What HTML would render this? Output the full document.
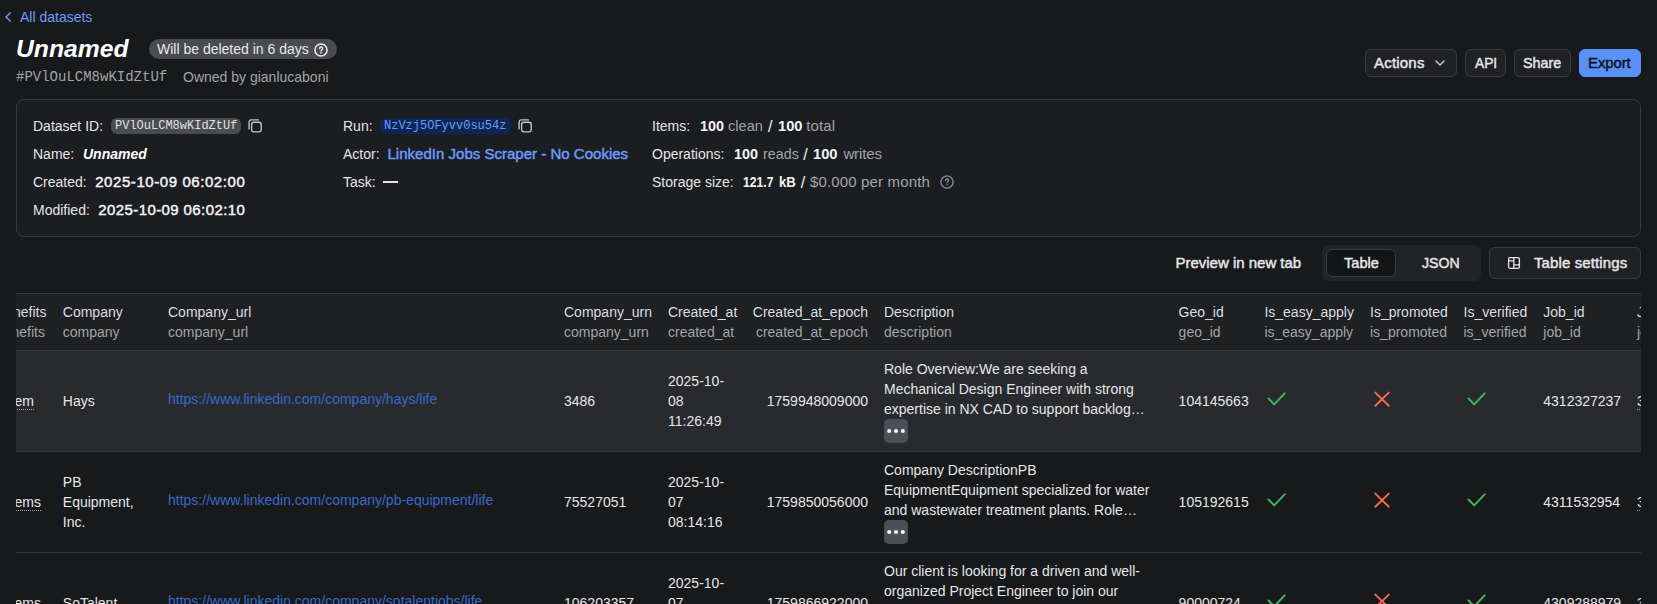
<!DOCTYPE html><html><head><meta charset="utf-8"><style>
*{margin:0;padding:0;box-sizing:border-box}
html,body{width:1657px;height:604px;overflow:hidden;background:#18191b;font-family:"Liberation Sans",sans-serif;font-size:14px;line-height:20px;color:#e6e6e8}
.a{position:absolute;white-space:nowrap}
.mono{font-family:"Liberation Mono",monospace}
.b{font-weight:700}
.g{color:#a3a4a8}
.lnk{color:#6b9bfa}
.btn{position:absolute;height:28px;border:1px solid #3b3c41;border-radius:6px;background:#202124;font-weight:700;line-height:26px;color:#e6e6e8}
.card{position:absolute;left:16px;top:99px;width:1625px;height:138px;border:1px solid #3a3b3f;border-radius:8px;background:#1c1d20}
.tbl{position:absolute;left:16px;top:293px;width:1625px;height:311px;overflow:hidden}
.cell{position:absolute;white-space:nowrap}
</style></head><body>
<svg class="a" style="left:4px;top:11px" width="8" height="12" viewBox="0 0 8 12"><path d="M6.2 2 L2 6 L6.2 10" fill="none" stroke="#6b9bfa" stroke-width="1.5" stroke-linecap="round" stroke-linejoin="round"/></svg>
<div class="a lnk" style="left:20px;top:7px;">All datasets</div>
<div class="a" style="left:16px;top:34px;font-size:24.7px;line-height:30px;font-weight:700;font-style:italic;color:#fff">Unnamed</div>
<div class="a" style="left:149px;top:39px;width:188px;height:20px;border-radius:10px;background:#494b50"></div>
<div class="a " style="left:157px;top:39px;color:#e8e8ea">Will be deleted in 6 days</div>
<svg class="a" style="left:314px;top:43px" width="14" height="14" viewBox="0 0 14 14"><circle cx="7" cy="7" r="6.1" fill="none" stroke="#ececee" stroke-width="1.5"/><path d="M5.55 5.5 a1.5 1.5 0 1 1 2.2 1.3 c-.45.25-.75.5-.75 1.05" fill="none" stroke="#ececee" stroke-width="1.4" stroke-linecap="round"/><circle cx="7" cy="9.7" r=".85" fill="#ececee"/></svg>
<div class="a mono g" style="left:16px;top:67px;font-size:14px">#PVlOuLCM8wKIdZtUf</div>
<div class="a g" style="left:183px;top:67px;">Owned by gianlucaboni</div>
<div class="btn" style="left:1365px;top:49px;width:92px;padding-left:9px"></div>
<svg class="a" style="left:1434px;top:58px" width="12" height="10" viewBox="0 0 12 10"><path d="M2 3 L6 7 L10 3" fill="none" stroke="#d6d6da" stroke-width="1.3" stroke-linecap="round" stroke-linejoin="round"/></svg>
<div class="btn" style="left:1465px;top:49px;width:41px;padding-left:9px"></div>
<div class="btn" style="left:1514px;top:49px;width:57px;padding-left:9px"></div>
<div class="btn" style="left:1579px;top:49px;width:62px;padding-left:9px;background:#5b8ff9;border-color:#5b8ff9;color:#111215"></div>
<div class="a" style="left:1374.00px;top:52.50px;font-size:15px;font-weight:400;letter-spacing:0.200px;color:#e6e6e8;-webkit-text-stroke:0.45px #e6e6e8;">Actions</div>
<div class="a" style="left:1474.90px;top:52.50px;font-size:15px;font-weight:400;letter-spacing:0.000px;color:#e6e6e8;-webkit-text-stroke:0.45px #e6e6e8;transform:scaleX(0.9167);transform-origin:0.00px 0;">API</div>
<div class="a" style="left:1523.30px;top:52.50px;font-size:15px;font-weight:400;letter-spacing:0.000px;color:#e6e6e8;-webkit-text-stroke:0.45px #e6e6e8;transform:scaleX(0.9550);transform-origin:0.00px 0;">Share</div>
<div class="a" style="left:1588.10px;top:52.50px;font-size:15px;font-weight:400;letter-spacing:-0.140px;color:#121316;-webkit-text-stroke:0.45px #121316;">Export</div>
<div class="card"></div>
<div class="a " style="left:33px;top:116px;">Dataset ID:</div>
<div class="a" style="left:111px;top:118px;width:130px;height:16px;border-radius:6px;background:#4b4c51"></div>
<div class="a mono" style="left:115px;top:116px;font-size:12px;color:#e0e0e3">PVlOuLCM8wKIdZtUf</div>
<svg class="a" style="left:247px;top:118px" width="16" height="16" viewBox="0 0 16 16"><rect x="4.6" y="4.2" width="9.6" height="9.6" rx="2.2" fill="none" stroke="#c4c5c9" stroke-width="1.35"/><path d="M2.1 10.9 V4 a2.1 2.1 0 0 1 2.1-2.1 H11.4" fill="none" stroke="#c4c5c9" stroke-width="1.35" stroke-linecap="round"/></svg>
<div class="a " style="left:33px;top:144px;">Name:</div>
<div class="a b" style="left:83px;top:144px;font-style:italic;color:#fff">Unnamed</div>
<div class="a " style="left:33px;top:172px;">Created:</div>
<div class="a" style="left:95.20px;top:171.50px;font-size:15px;font-weight:400;letter-spacing:0.572px;color:#f4f4f6;-webkit-text-stroke:0.45px #f4f4f6;">2025-10-09 06:02:00</div>
<div class="a " style="left:33px;top:200px;">Modified:</div>
<div class="a" style="left:98.30px;top:199.50px;font-size:15px;font-weight:400;letter-spacing:0.400px;color:#f4f4f6;-webkit-text-stroke:0.45px #f4f4f6;">2025-10-09 06:02:10</div>
<div class="a " style="left:343px;top:116px;">Run:</div>
<div class="a" style="left:380px;top:118px;width:131px;height:16px;border-radius:6px;background:#0f2553"></div>
<div class="a mono" style="left:384px;top:116px;font-size:12px;color:#6b9bfa">NzVzj5OFyvv0su54z</div>
<svg class="a" style="left:517px;top:118px" width="16" height="16" viewBox="0 0 16 16"><rect x="4.6" y="4.2" width="9.6" height="9.6" rx="2.2" fill="none" stroke="#c4c5c9" stroke-width="1.35"/><path d="M2.1 10.9 V4 a2.1 2.1 0 0 1 2.1-2.1 H11.4" fill="none" stroke="#c4c5c9" stroke-width="1.35" stroke-linecap="round"/></svg>
<div class="a " style="left:343px;top:144px;">Actor:</div>
<div class="a" style="left:387.50px;top:143.50px;font-size:15px;font-weight:400;letter-spacing:0.015px;color:#6b9bfa;-webkit-text-stroke:0.45px #6b9bfa;">LinkedIn Jobs Scraper - No Cookies</div>
<div class="a " style="left:343px;top:172px;">Task:</div>
<div class="a" style="left:383px;top:181px;width:15px;height:2px;background:#e6e6e8"></div>
<div class="a " style="left:652px;top:116px;">Items:</div>
<div class="a " style="left:652px;top:144px;">Operations:</div>
<div class="a " style="left:652px;top:172px;">Storage size:</div>
<div class="a" style="left:699.50px;top:115.50px;font-size:15px;font-weight:700;letter-spacing:0.000px;color:#f4f4f6;transform:scaleX(0.9560);transform-origin:0.00px 0;">100</div>
<div class="a" style="left:728.30px;top:115.50px;font-size:15px;font-weight:400;letter-spacing:0.000px;color:#a3a4a8;transform:scaleX(0.9722);transform-origin:0.00px 0;">clean</div>
<div class="a" style="left:767.90px;top:116.50px;font-size:16px;font-weight:400;letter-spacing:0.000px;color:#f4f4f6;">/</div>
<div class="a" style="left:777.50px;top:115.50px;font-size:15px;font-weight:700;letter-spacing:0.000px;color:#f4f4f6;transform:scaleX(0.9800);transform-origin:0.00px 0;">100</div>
<div class="a" style="left:806.20px;top:115.50px;font-size:15px;font-weight:400;letter-spacing:0.125px;color:#a3a4a8;">total</div>
<div class="a" style="left:733.70px;top:143.50px;font-size:15px;font-weight:700;letter-spacing:0.000px;color:#f4f4f6;transform:scaleX(0.9560);transform-origin:0.00px 0;">100</div>
<div class="a" style="left:762.50px;top:143.50px;font-size:15px;font-weight:400;letter-spacing:0.000px;color:#a3a4a8;transform:scaleX(0.9553);transform-origin:0.00px 0;">reads</div>
<div class="a" style="left:803.20px;top:144.50px;font-size:16px;font-weight:400;letter-spacing:0.000px;color:#f4f4f6;">/</div>
<div class="a" style="left:813.00px;top:143.50px;font-size:15px;font-weight:700;letter-spacing:0.000px;color:#f4f4f6;transform:scaleX(0.9800);transform-origin:0.00px 0;">100</div>
<div class="a" style="left:843.40px;top:143.50px;font-size:15px;font-weight:400;letter-spacing:-0.120px;color:#a3a4a8;">writes</div>
<div class="a" style="left:743.00px;top:171.50px;font-size:15px;font-weight:700;letter-spacing:0.000px;color:#f4f4f6;transform:scaleX(0.8132);transform-origin:0.00px 0;">121.7</div>
<div class="a" style="left:779.30px;top:171.50px;font-size:15px;font-weight:700;letter-spacing:0.000px;color:#f4f4f6;transform:scaleX(0.8737);transform-origin:0.00px 0;">kB</div>
<div class="a" style="left:800.80px;top:172.50px;font-size:16px;font-weight:400;letter-spacing:0.000px;color:#f4f4f6;">/</div>
<div class="a" style="left:810.00px;top:171.50px;font-size:15px;font-weight:400;letter-spacing:0.153px;color:#a3a4a8;">$0.000 per month</div>
<svg class="a" style="left:940px;top:175px" width="14" height="14" viewBox="0 0 14 14"><circle cx="7" cy="7" r="6.1" fill="none" stroke="#8b8c91" stroke-width="1.35"/><path d="M5.55 5.5 a1.5 1.5 0 1 1 2.2 1.3 c-.45.25-.75.5-.75 1.05" fill="none" stroke="#8b8c91" stroke-width="1.3" stroke-linecap="round"/><circle cx="7" cy="9.7" r=".8" fill="#8b8c91"/></svg>
<div class="a" style="left:1175.50px;top:252.50px;font-size:15px;font-weight:400;letter-spacing:-0.012px;color:#e6e6e8;-webkit-text-stroke:0.45px #e6e6e8;">Preview in new tab</div>
<div class="a" style="left:1322px;top:245px;width:159px;height:36px;border-radius:7px;background:#222327"></div>
<div class="a" style="left:1326px;top:249px;width:70px;height:28px;border-radius:6px;background:#141517;border:1px solid #3b3c41"></div>
<div class="a" style="left:1344.30px;top:252.50px;font-size:15px;font-weight:400;letter-spacing:0.000px;color:#e6e6e8;-webkit-text-stroke:0.45px #e6e6e8;transform:scaleX(0.9722);transform-origin:0.00px 0;">Table</div>
<div class="a" style="left:1421.70px;top:252.50px;font-size:15px;font-weight:400;letter-spacing:0.000px;color:#e6e6e8;-webkit-text-stroke:0.45px #e6e6e8;transform:scaleX(0.9400);transform-origin:0.00px 0;">JSON</div>
<div class="btn" style="left:1489px;top:247px;width:152px;height:32px"></div>
<svg class="a" style="left:1507px;top:256px" width="14" height="14" viewBox="0 0 14 14"><rect x="1.6" y="1.6" width="10.8" height="10.8" rx="1.5" fill="none" stroke="#e6e6e8" stroke-width="1.3"/><path d="M6.8 1.6 V12.4 M1.6 4.8 H6.8 M6.8 8.9 H12.4" stroke="#e6e6e8" stroke-width="1.3"/></svg>
<div class="a" style="left:1534.00px;top:252.50px;font-size:15px;font-weight:400;letter-spacing:0.108px;color:#e6e6e8;-webkit-text-stroke:0.45px #e6e6e8;">Table settings</div>
<div class="a" style="left:16px;top:293px;width:1625px;height:1px;background:#35363a"></div>
<div class="a" style="left:16px;top:294px;width:1625px;height:56px;background:#1f2022"></div>
<div class="a" style="left:16px;top:350px;width:1625px;height:1px;background:#35363a"></div>
<div class="a" style="left:16px;top:351px;width:1625px;height:100px;background:#292a2e"></div>
<div class="a" style="left:16px;top:451px;width:1625px;height:1px;background:#35363a"></div>
<div class="a" style="left:16px;top:552px;width:1625px;height:1px;background:#35363a"></div>
<div class="tbl"><div class="cell" style="left:-20.1px;top:1px;height:56px;display:flex;align-items:center;"><div><div style="color:#dcdde0">Benefits</div><div style="color:#a3a4a8">benefits</div></div></div>
<div class="cell" style="left:46.8px;top:1px;height:56px;display:flex;align-items:center;"><div><div style="color:#dcdde0">Company</div><div style="color:#a3a4a8">company</div></div></div>
<div class="cell" style="left:152px;top:1px;height:56px;display:flex;align-items:center;"><div><div style="color:#dcdde0">Company_url</div><div style="color:#a3a4a8">company_url</div></div></div>
<div class="cell" style="left:548px;top:1px;height:56px;display:flex;align-items:center;"><div><div style="color:#dcdde0">Company_urn</div><div style="color:#a3a4a8">company_urn</div></div></div>
<div class="cell" style="left:652px;top:1px;height:56px;display:flex;align-items:center;"><div><div style="color:#dcdde0">Created_at</div><div style="color:#a3a4a8">created_at</div></div></div>
<div class="cell" style="right:773px;text-align:right;justify-content:flex-end;top:1px;height:56px;display:flex;align-items:center;"><div><div style="color:#dcdde0">Created_at_epoch</div><div style="color:#a3a4a8">created_at_epoch</div></div></div>
<div class="cell" style="left:868px;top:1px;height:56px;display:flex;align-items:center;"><div><div style="color:#dcdde0">Description</div><div style="color:#a3a4a8">description</div></div></div>
<div class="cell" style="left:1162.6px;top:1px;height:56px;display:flex;align-items:center;"><div><div style="color:#dcdde0">Geo_id</div><div style="color:#a3a4a8">geo_id</div></div></div>
<div class="cell" style="left:1248.4px;top:1px;height:56px;display:flex;align-items:center;"><div><div style="color:#dcdde0">Is_easy_apply</div><div style="color:#a3a4a8">is_easy_apply</div></div></div>
<div class="cell" style="left:1354px;top:1px;height:56px;display:flex;align-items:center;"><div><div style="color:#dcdde0">Is_promoted</div><div style="color:#a3a4a8">is_promoted</div></div></div>
<div class="cell" style="left:1447.5px;top:1px;height:56px;display:flex;align-items:center;"><div><div style="color:#dcdde0">Is_verified</div><div style="color:#a3a4a8">is_verified</div></div></div>
<div class="cell" style="left:1527.3px;top:1px;height:56px;display:flex;align-items:center;"><div><div style="color:#dcdde0">Job_id</div><div style="color:#a3a4a8">job_id</div></div></div>
<div class="cell" style="left:1621px;top:1px;height:56px;display:flex;align-items:center;"><div><div style="color:#dcdde0">Job_function</div><div style="color:#a3a4a8">job_function</div></div></div>
<div class="cell" style="left:-20.1px;top:58px;height:100px;display:flex;align-items:center;"><div><span style="border-bottom:1px dotted #a3a4a8;padding-bottom:0">1 item</span></div></div>
<div class="cell" style="left:46.8px;top:58px;height:100px;display:flex;align-items:center;"><div>Hays</div></div>
<div class="cell" style="left:152px;top:55.5px;height:100px;display:flex;align-items:center;"><div><span style="color:#3868cc">https://www.linkedin.com/company/hays/life</span></div></div>
<div class="cell" style="left:548px;top:58px;height:100px;display:flex;align-items:center;"><div>3486</div></div>
<div class="cell" style="left:652px;top:58px;height:100px;display:flex;align-items:center;"><div>2025-10-<br>08<br>11:26:49</div></div>
<div class="cell" style="right:773px;text-align:right;justify-content:flex-end;top:58px;height:100px;display:flex;align-items:center;"><div>1759948009000</div></div>
<div class="cell" style="left:868px;top:66px;line-height:20px">Role Overview:We are seeking a<br>Mechanical Design Engineer with strong<br>expertise in NX CAD to support backlog…<div style="margin-top:0;width:24px;height:24px;border-radius:5px;background:#4c4f55;position:relative"><svg width="24" height="24" viewBox="0 0 24 24" style="position:absolute;left:0;top:0"><circle cx="5.2" cy="12" r="2.1" fill="#f4f4f6"/><circle cx="12" cy="12" r="2.1" fill="#f4f4f6"/><circle cx="18.8" cy="12" r="2.1" fill="#f4f4f6"/></svg></div></div>
<div class="cell" style="left:1162.6px;top:58px;height:100px;display:flex;align-items:center;"><div>104145663</div></div>
<svg class="cell" style="left:1248px;top:96px" width="24" height="24" viewBox="0 0 24 24"><path d="M4.5 9.5 L10.2 15.4 L20.7 4.4" fill="none" stroke="#3bb85c" stroke-width="2" stroke-linecap="round" stroke-linejoin="round"/></svg>
<svg class="cell" style="left:1354px;top:96px" width="24" height="24" viewBox="0 0 24 24"><path d="M5.3 3.6 L18.8 16.7 M18.8 3.6 L5.3 16.7" fill="none" stroke="#f56a50" stroke-width="1.9" stroke-linecap="round"/></svg>
<svg class="cell" style="left:1448px;top:96px" width="24" height="24" viewBox="0 0 24 24"><path d="M4.5 9.5 L10.2 15.4 L20.7 4.4" fill="none" stroke="#3bb85c" stroke-width="2" stroke-linecap="round" stroke-linejoin="round"/></svg>
<div class="cell" style="left:1527.3px;top:58px;height:100px;display:flex;align-items:center;"><div>4312327237</div></div>
<div class="cell" style="left:1621px;top:58px;height:100px;display:flex;align-items:center;"><div><span style="border-bottom:1px dotted #a3a4a8">3 items</span></div></div>
<div class="cell" style="left:-20.1px;top:159px;height:100px;display:flex;align-items:center;"><div><span style="border-bottom:1px dotted #a3a4a8;padding-bottom:0">2 items</span></div></div>
<div class="cell" style="left:46.8px;top:159px;height:100px;display:flex;align-items:center;"><div>PB<br>Equipment,<br>Inc.</div></div>
<div class="cell" style="left:152px;top:156.5px;height:100px;display:flex;align-items:center;"><div><span style="color:#3868cc">https://www.linkedin.com/company/pb-equipment/life</span></div></div>
<div class="cell" style="left:548px;top:159px;height:100px;display:flex;align-items:center;"><div>75527051</div></div>
<div class="cell" style="left:652px;top:159px;height:100px;display:flex;align-items:center;"><div>2025-10-<br>07<br>08:14:16</div></div>
<div class="cell" style="right:773px;text-align:right;justify-content:flex-end;top:159px;height:100px;display:flex;align-items:center;"><div>1759850056000</div></div>
<div class="cell" style="left:868px;top:167px;line-height:20px">Company DescriptionPB<br>EquipmentEquipment specialized for water<br>and wastewater treatment plants. Role…<div style="margin-top:0;width:24px;height:24px;border-radius:5px;background:#4c4f55;position:relative"><svg width="24" height="24" viewBox="0 0 24 24" style="position:absolute;left:0;top:0"><circle cx="5.2" cy="12" r="2.1" fill="#f4f4f6"/><circle cx="12" cy="12" r="2.1" fill="#f4f4f6"/><circle cx="18.8" cy="12" r="2.1" fill="#f4f4f6"/></svg></div></div>
<div class="cell" style="left:1162.6px;top:159px;height:100px;display:flex;align-items:center;"><div>105192615</div></div>
<svg class="cell" style="left:1248px;top:197px" width="24" height="24" viewBox="0 0 24 24"><path d="M4.5 9.5 L10.2 15.4 L20.7 4.4" fill="none" stroke="#3bb85c" stroke-width="2" stroke-linecap="round" stroke-linejoin="round"/></svg>
<svg class="cell" style="left:1354px;top:197px" width="24" height="24" viewBox="0 0 24 24"><path d="M5.3 3.6 L18.8 16.7 M18.8 3.6 L5.3 16.7" fill="none" stroke="#f56a50" stroke-width="1.9" stroke-linecap="round"/></svg>
<svg class="cell" style="left:1448px;top:197px" width="24" height="24" viewBox="0 0 24 24"><path d="M4.5 9.5 L10.2 15.4 L20.7 4.4" fill="none" stroke="#3bb85c" stroke-width="2" stroke-linecap="round" stroke-linejoin="round"/></svg>
<div class="cell" style="left:1527.3px;top:159px;height:100px;display:flex;align-items:center;"><div>4311532954</div></div>
<div class="cell" style="left:1621px;top:159px;height:100px;display:flex;align-items:center;"><div><span style="border-bottom:1px dotted #a3a4a8">3 items</span></div></div>
<div class="cell" style="left:-20.1px;top:260px;height:100px;display:flex;align-items:center;"><div><span style="border-bottom:1px dotted #a3a4a8;padding-bottom:0">2 items</span></div></div>
<div class="cell" style="left:46.8px;top:260px;height:100px;display:flex;align-items:center;"><div>SoTalent</div></div>
<div class="cell" style="left:152px;top:257.5px;height:100px;display:flex;align-items:center;"><div><span style="color:#3868cc">https://www.linkedin.com/company/sotalentjobs/life</span></div></div>
<div class="cell" style="left:548px;top:260px;height:100px;display:flex;align-items:center;"><div>106203357</div></div>
<div class="cell" style="left:652px;top:260px;height:100px;display:flex;align-items:center;"><div>2025-10-<br>07<br>09:48:42</div></div>
<div class="cell" style="right:773px;text-align:right;justify-content:flex-end;top:260px;height:100px;display:flex;align-items:center;"><div>1759866922000</div></div>
<div class="cell" style="left:868px;top:268px;line-height:20px">Our client is looking for a driven and well-<br>organized Project Engineer to join our<br>team in the Spring area…<div style="margin-top:0;width:24px;height:24px;border-radius:5px;background:#4c4f55;position:relative"><svg width="24" height="24" viewBox="0 0 24 24" style="position:absolute;left:0;top:0"><circle cx="5.2" cy="12" r="2.1" fill="#f4f4f6"/><circle cx="12" cy="12" r="2.1" fill="#f4f4f6"/><circle cx="18.8" cy="12" r="2.1" fill="#f4f4f6"/></svg></div></div>
<div class="cell" style="left:1162.6px;top:260px;height:100px;display:flex;align-items:center;"><div>90000724</div></div>
<svg class="cell" style="left:1248px;top:298px" width="24" height="24" viewBox="0 0 24 24"><path d="M4.5 9.5 L10.2 15.4 L20.7 4.4" fill="none" stroke="#3bb85c" stroke-width="2" stroke-linecap="round" stroke-linejoin="round"/></svg>
<svg class="cell" style="left:1354px;top:298px" width="24" height="24" viewBox="0 0 24 24"><path d="M5.3 3.6 L18.8 16.7 M18.8 3.6 L5.3 16.7" fill="none" stroke="#f56a50" stroke-width="1.9" stroke-linecap="round"/></svg>
<svg class="cell" style="left:1448px;top:298px" width="24" height="24" viewBox="0 0 24 24"><path d="M4.5 9.5 L10.2 15.4 L20.7 4.4" fill="none" stroke="#3bb85c" stroke-width="2" stroke-linecap="round" stroke-linejoin="round"/></svg>
<div class="cell" style="left:1527.3px;top:260px;height:100px;display:flex;align-items:center;"><div>4309288979</div></div>
<div class="cell" style="left:1621px;top:260px;height:100px;display:flex;align-items:center;"><div><span style="border-bottom:1px dotted #a3a4a8">3 items</span></div></div>
</div>

</body></html>
